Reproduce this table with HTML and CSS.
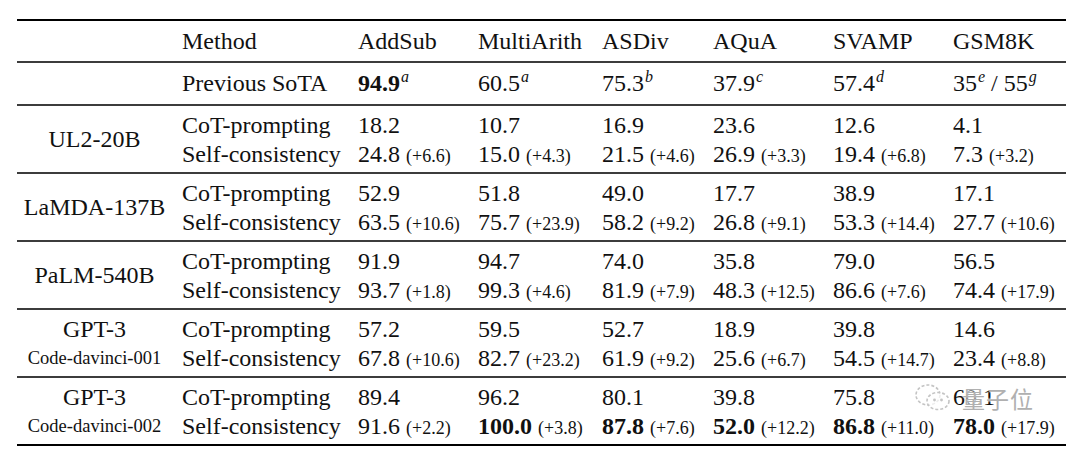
FILE: index.html
```html
<!DOCTYPE html>
<html>
<head>
  <meta charset="UTF-8">
  <title>Self-consistency results</title>
  <link rel="stylesheet" href="styles.css">
</head>
<body>
  <div class="results">
    <div class="row head">
      <div class="cell"></div>
      <div class="cell">Method</div>
      <div class="cell">AddSub</div>
      <div class="cell">MultiArith</div>
      <div class="cell">ASDiv</div>
      <div class="cell">AQuA</div>
      <div class="cell">SVAMP</div>
      <div class="cell">GSM8K</div>
    </div>

    <div class="row sota">
      <div class="cell"></div>
      <div class="cell">Previous SoTA</div>
      <div class="cell"><b>94.9</b><sup>a</sup></div>
      <div class="cell">60.5<sup>a</sup></div>
      <div class="cell">75.3<sup>b</sup></div>
      <div class="cell">37.9<sup>c</sup></div>
      <div class="cell">57.4<sup>d</sup></div>
      <div class="cell">35<sup>e</sup> / 55<sup>g</sup></div>
    </div>

    <div class="row group">
      <div class="cell model">UL2-20B</div>
      <div class="cell lines"><span>CoT-prompting</span><span>Self-consistency</span></div>
      <div class="cell lines"><span>18.2</span><span>24.8 <small>(+6.6)</small></span></div>
      <div class="cell lines"><span>10.7</span><span>15.0 <small>(+4.3)</small></span></div>
      <div class="cell lines"><span>16.9</span><span>21.5 <small>(+4.6)</small></span></div>
      <div class="cell lines"><span>23.6</span><span>26.9 <small>(+3.3)</small></span></div>
      <div class="cell lines"><span>12.6</span><span>19.4 <small>(+6.8)</small></span></div>
      <div class="cell lines"><span>4.1</span><span>7.3 <small>(+3.2)</small></span></div>
    </div>

    <div class="row group">
      <div class="cell model">LaMDA-137B</div>
      <div class="cell lines"><span>CoT-prompting</span><span>Self-consistency</span></div>
      <div class="cell lines"><span>52.9</span><span>63.5 <small>(+10.6)</small></span></div>
      <div class="cell lines"><span>51.8</span><span>75.7 <small>(+23.9)</small></span></div>
      <div class="cell lines"><span>49.0</span><span>58.2 <small>(+9.2)</small></span></div>
      <div class="cell lines"><span>17.7</span><span>26.8 <small>(+9.1)</small></span></div>
      <div class="cell lines"><span>38.9</span><span>53.3 <small>(+14.4)</small></span></div>
      <div class="cell lines"><span>17.1</span><span>27.7 <small>(+10.6)</small></span></div>
    </div>

    <div class="row group">
      <div class="cell model">PaLM-540B</div>
      <div class="cell lines"><span>CoT-prompting</span><span>Self-consistency</span></div>
      <div class="cell lines"><span>91.9</span><span>93.7 <small>(+1.8)</small></span></div>
      <div class="cell lines"><span>94.7</span><span>99.3 <small>(+4.6)</small></span></div>
      <div class="cell lines"><span>74.0</span><span>81.9 <small>(+7.9)</small></span></div>
      <div class="cell lines"><span>35.8</span><span>48.3 <small>(+12.5)</small></span></div>
      <div class="cell lines"><span>79.0</span><span>86.6 <small>(+7.6)</small></span></div>
      <div class="cell lines"><span>56.5</span><span>74.4 <small>(+17.9)</small></span></div>
    </div>

    <div class="row group">
      <div class="cell model lines"><span>GPT-3</span><span class="engine">Code-davinci-001</span></div>
      <div class="cell lines"><span>CoT-prompting</span><span>Self-consistency</span></div>
      <div class="cell lines"><span>57.2</span><span>67.8 <small>(+10.6)</small></span></div>
      <div class="cell lines"><span>59.5</span><span>82.7 <small>(+23.2)</small></span></div>
      <div class="cell lines"><span>52.7</span><span>61.9 <small>(+9.2)</small></span></div>
      <div class="cell lines"><span>18.9</span><span>25.6 <small>(+6.7)</small></span></div>
      <div class="cell lines"><span>39.8</span><span>54.5 <small>(+14.7)</small></span></div>
      <div class="cell lines"><span>14.6</span><span>23.4 <small>(+8.8)</small></span></div>
    </div>

    <div class="row group last">
      <div class="cell model lines"><span>GPT-3</span><span class="engine">Code-davinci-002</span></div>
      <div class="cell lines"><span>CoT-prompting</span><span>Self-consistency</span></div>
      <div class="cell lines"><span>89.4</span><span>91.6 <small>(+2.2)</small></span></div>
      <div class="cell lines"><span>96.2</span><span><b>100.0</b> <small>(+3.8)</small></span></div>
      <div class="cell lines"><span>80.1</span><span><b>87.8</b> <small>(+7.6)</small></span></div>
      <div class="cell lines"><span>39.8</span><span><b>52.0</b> <small>(+12.2)</small></span></div>
      <div class="cell lines"><span>75.8</span><span><b>86.8</b> <small>(+11.0)</small></span></div>
      <div class="cell lines"><span>60.1</span><span><b>78.0</b> <small>(+17.9)</small></span></div>
    </div>
  </div>

  <!-- watermark over the last group -->
  <div class="watermark">
    <svg class="wm-icon" width="38" height="30" viewBox="0 0 38 30">
      <ellipse cx="14" cy="12" rx="12" ry="10" fill="none" stroke="#c4c4c4" stroke-width="1.6" stroke-dasharray="3 2"/>
      <ellipse cx="24" cy="18" rx="11" ry="8.5" fill="#fff" fill-opacity="0.7" stroke="#c4c4c4" stroke-width="1.6" stroke-dasharray="3 2"/>
      <circle cx="20.5" cy="17" r="1.4" fill="#c4c4c4"/>
      <circle cx="27.5" cy="17" r="1.4" fill="#c4c4c4"/>
    </svg>
    <span class="wm-text">量子位</span>
  </div>
</body>
</html>
```

FILE: styles.css
```css
body {
  margin: 0;
  background-color: #ffffff;
  color: #111111;
  font-family: "Liberation Serif", "Times New Roman", serif;
  font-size: 24px;
  position: relative;
  height: 449px;
  overflow: hidden;
}

.results {
  margin: 19px 0 0 17px;
  width: 1049px;
  border-top: 2px solid #000000;
  border-bottom: 2px solid #000000;
}

.row {
  display: grid;
  grid-template-columns: 165px 176px 120px 124px 111px 120px 120px 113px;
  border-bottom: 2px solid #3c3c3c;
}

.row.last {
  border-bottom: none;
}

.cell {
  white-space: nowrap;
}

.head {
  height: 40px;
  align-items: center;
}

.sota {
  height: 41px;
  align-items: center;
}

.group {
  height: 66px;
}

.lines {
  display: flex;
  flex-direction: column;
  padding-top: 5px;
  line-height: 28.5px;
}

.model {
  padding-right: 10px;
  text-align: center;
  align-self: center;
}

.model.lines {
  align-self: stretch;
  align-items: center;
}

.engine {
  font-size: 18.5px;
}

small {
  font-size: 18px;
}

b {
  font-weight: bold;
}

sup {
  font-size: 16px;
  font-style: italic;
  line-height: 0;
  vertical-align: 9px;
  margin-left: 1px;
}

.watermark {
  position: absolute;
  left: 914px;
  top: 381px;
  display: flex;
  align-items: center;
  gap: 10px;
}

.wm-text {
  font-family: "Noto Sans CJK SC", sans-serif;
  font-size: 23px;
  color: #b0b0b0;
  letter-spacing: 1px;
  text-shadow: 0 0 2px #ffffff, 0 0 2px #ffffff;
}
```
